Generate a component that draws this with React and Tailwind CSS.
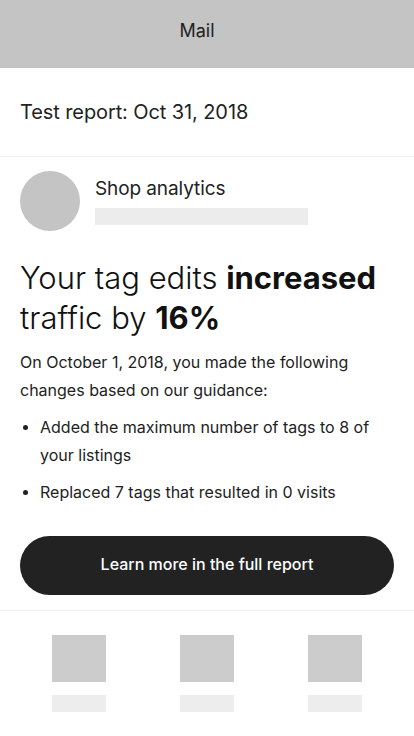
export default function App() {
  const font = { fontFamily: 'Inter, "Noto Sans", sans-serif' };
  return (
    <div className="w-[414px] h-[736px] bg-white overflow-hidden text-[#222]" style={font}>
      <div className="h-[68px] bg-[#c4c4c4] flex items-center justify-center pr-[20px] pb-[7px]">
        <span className="text-[18px] text-[#222] font-normal">Mail</span>
      </div>
      <div className="h-[89px] flex items-center px-5 border-b border-[#efefef]">
        <span className="text-[20px] tracking-[-0.1px]">Test report: Oct 31, 2018</span>
      </div>
      <div className="flex px-5 pt-[14px]">
        <div className="w-[60px] h-[60px] rounded-full bg-[#c4c4c4] shrink-0" />
        <div className="ml-[15px] flex flex-col">
          <span className="text-[19px] leading-[24px] mt-[6px] tracking-[-0.1px]">Shop analytics</span>
          <div className="w-[213px] h-[17px] bg-[#ececec] mt-[7px]" />
        </div>
      </div>
      <div className="px-5 mt-[27px]">
        <h1 className="text-[31px] leading-[40px] font-light tracking-[0px] text-[#111]">
          Your tag edits <span className="font-bold">increased</span> traffic by <span className="font-bold">16%</span>
        </h1>
        <p className="text-[16px] leading-[28px] mt-[10px]">
          On October 1, 2018, you made the following changes based on our guidance:
        </p>
        <ul className="mt-[9px] flex flex-col gap-[9px] text-[16px] leading-[28px]">
          <li className="flex">
            <span className="w-[20px] shrink-0 flex pt-[12px] pl-[3px]"><span className="w-[5px] h-[5px] rounded-full bg-[#222]" /></span>
            <span>Added the maximum number of tags to 8 of your listings</span>
          </li>
          <li className="flex">
            <span className="w-[20px] shrink-0 flex pt-[12px] pl-[3px]"><span className="w-[5px] h-[5px] rounded-full bg-[#222]" /></span>
            <span>Replaced 7 tags that resulted in 0 visits</span>
          </li>
        </ul>
        <button className="mt-[30px] w-full h-[59px] rounded-full bg-[#222] text-white text-[16px] font-medium pb-[3px]">
          Learn more in the full report
        </button>
      </div>
      <div className="mt-[15px] border-t border-[#efefef] flex justify-center gap-[74px] pt-[24px]">
        {[0, 1, 2].map((i) => (
          <div key={i} className="flex flex-col gap-[13px]">
            <div className="w-[54px] h-[47px] bg-[#cccccc]" />
            <div className="w-[54px] h-[17px] bg-[#ededed]" />
          </div>
        ))}
      </div>
    </div>
  );
}
